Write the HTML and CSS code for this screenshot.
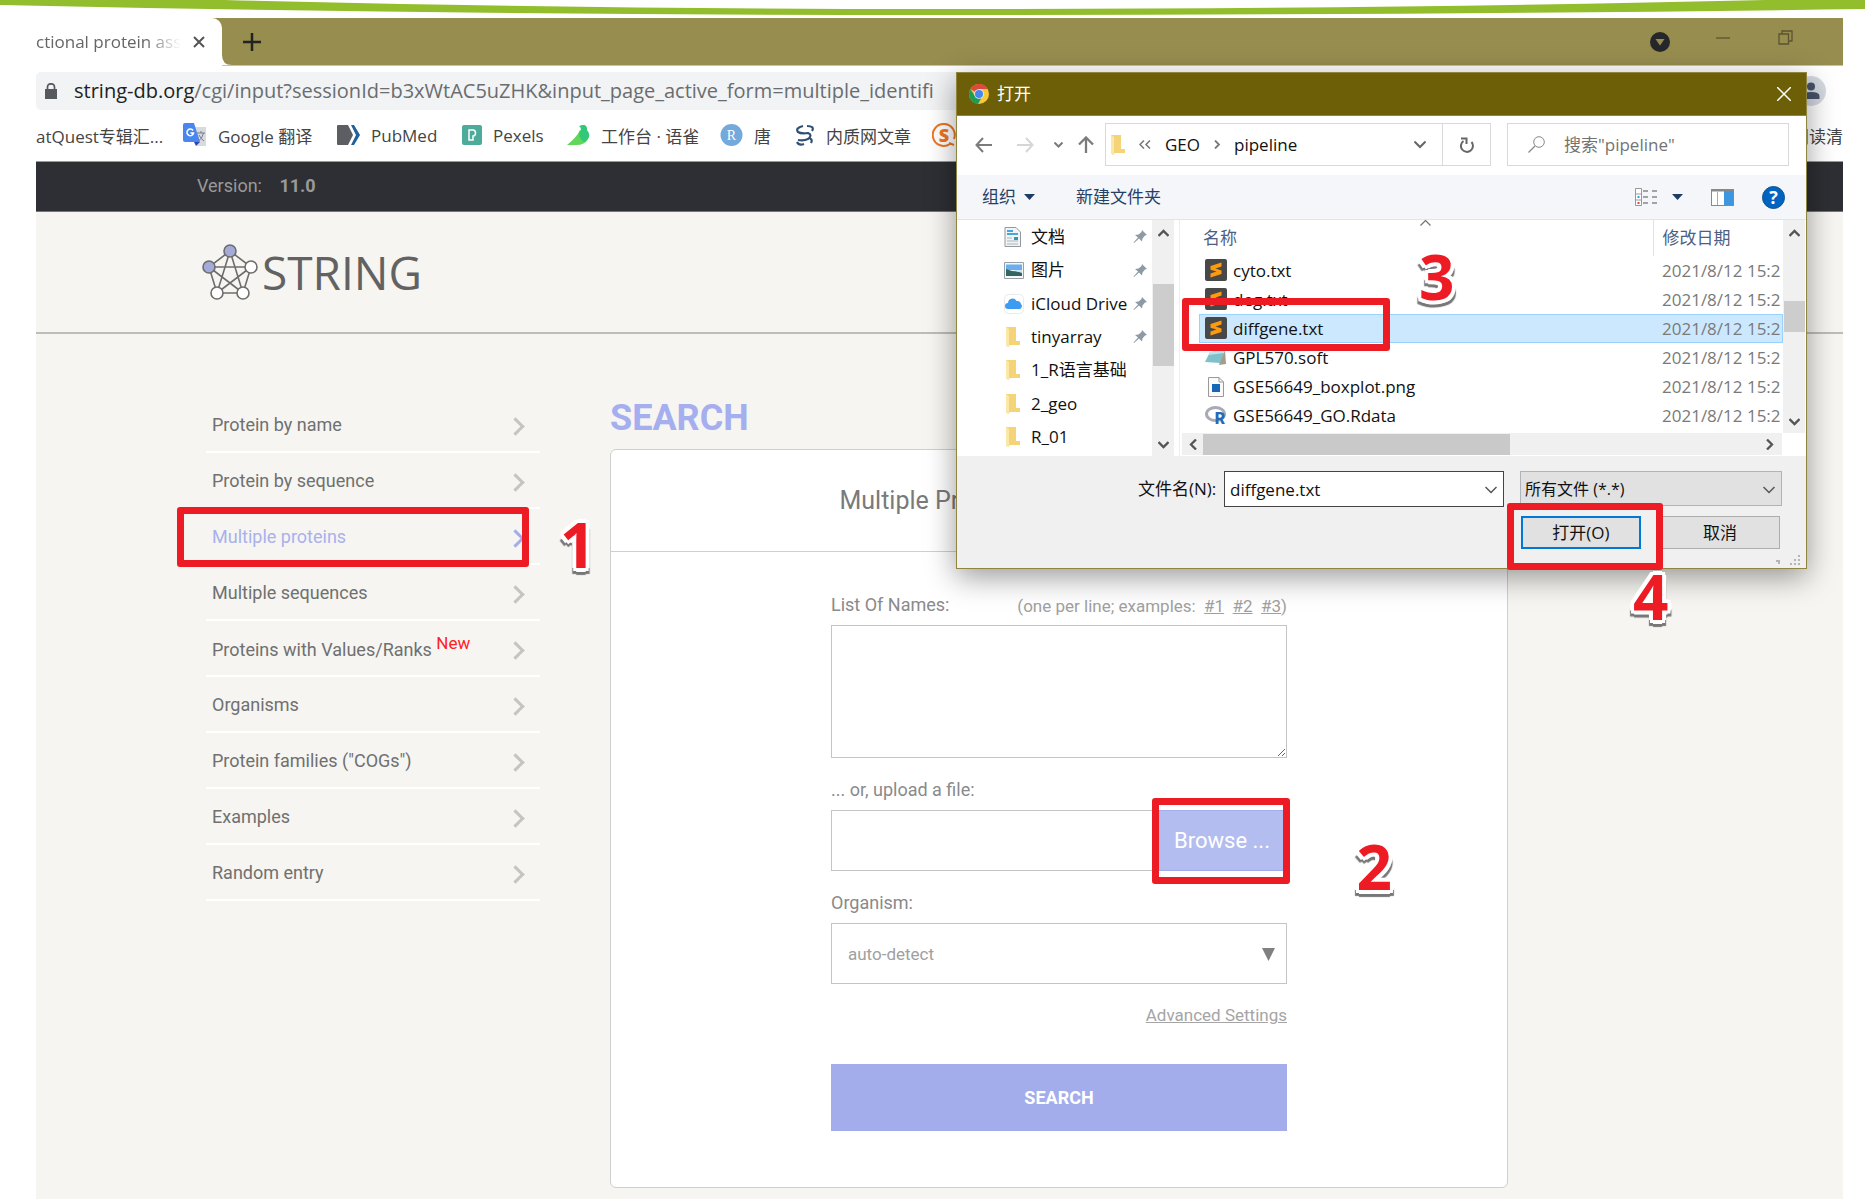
FILE: index.html
```html
<!DOCTYPE html>
<html lang="zh-CN">
<head>
<meta charset="utf-8">
<title>STRING: functional protein association networks</title>
<link rel="stylesheet" href="styles.css">
</head>
<body>
<div class="slide">
  <svg class="swoosh" viewBox="0 0 1865 18" preserveAspectRatio="none" aria-hidden="true"><path d="M0 0H225Q580 9 930 9Q1400 9 1765 0H1865V9Q1450 15 930 15Q450 15 0 5Z" fill="#92be2e"/></svg>

  <div class="browser">
    <div class="tabstrip">
      <div class="tab"><span class="tab-title">ctional protein ass</span>
        <button class="plain" aria-label="Close tab"><svg width="12" height="12" viewBox="0 0 12 12"><path d="M1 1L11 11M11 1L1 11" stroke="#555" stroke-width="2"/></svg></button>
      </div>
      <svg class="tab-foot" width="10" height="10" viewBox="0 0 10 10"><path d="M0 0Q0 10 10 10H0Z" fill="#fff"/></svg>
      <button class="plain newtab" aria-label="New tab"><svg width="18" height="18" viewBox="0 0 18 18"><path d="M9 0V18M0 9H18" stroke="#222" stroke-width="2.5"/></svg></button>
      <div class="win-controls">
        <svg width="20" height="20" viewBox="0 0 20 20"><circle cx="10" cy="10" r="10" fill="#25272b"/><path d="M5.500 7H14.500L10 13.500Z" fill="#978d4f"/></svg>
        <svg width="14" height="14" viewBox="0 0 14 14"><path d="M0 3H14" stroke="#5a5430" stroke-width="1.300"/></svg>
        <svg class="restore" width="15" height="15" viewBox="0 0 15 15"><path d="M1 4H10.500V14H1ZM4 4V1H14V11H10.500" fill="none" stroke="#5a5430" stroke-width="1.300"/></svg>
      </div>
    </div>
    <div class="toolbar">
      <div class="address">
        <svg width="12" height="16" viewBox="0 0 12 16"><path d="M0 6H12V16H0Z" fill="#55585d"/><path d="M2.500 6V4A3.500 3.200 0 0 1 9.500 4V6" fill="none" stroke="#55585d" stroke-width="1.700"/></svg>
        <span class="url"><b>string-db.org</b>/cgi/input?sessionId=b3xWtAC5uZHK&amp;input_page_active_form=multiple_identifi</span>
      </div>
      <svg class="avatar" width="30" height="30" viewBox="0 0 30 30"><circle cx="15" cy="15" r="15" fill="#d5d9e0"/><circle cx="15" cy="10.500" r="4" fill="#48546b"/><path d="M6.500 23V20Q6.500 16 15 16Q23.500 16 23.500 20V23Z" fill="#48546b"/></svg>
    </div>
    <nav class="bookmarks" aria-label="Bookmarks">
      <a href="#" class="bm-first">atQuest专辑汇...</a>
      <a href="#" class="bm-google"><svg width="24" height="24" viewBox="0 0 24 24"><path d="M9 4H23V23H14Z" fill="#d8dade"/><path d="M0 2Q0 0 2 0H11L17 19H2Q0 19 0 17Z" fill="#4a86f0"/><path d="M11 19H17L13 23Z" fill="#2b45b8"/><path d="M14 10H22M18 8V10M20.500 10Q19 16 15.500 18M16 12Q18 16 21 18" stroke="#777f89" fill="none"/><path d="M10 7.500A3.300 3.300 0 1 0 10.500 10H7.500" fill="none" stroke="#fff" stroke-width="1.500"/></svg>Google 翻译</a>
      <a href="#" class="bm-pubmed"><svg width="23" height="20" viewBox="0 0 23 20"><path d="M0 1Q0 0 1 0H11L16 10L11 20H1Q0 20 0 19Z" fill="#5c5e63"/><path d="M14 0H17L23 10L17 20H14L19 10Z" fill="#20609b"/></svg>PubMed</a>
      <a href="#" class="bm-pexels"><svg width="20" height="20" viewBox="0 0 20 20"><rect width="20" height="20" rx="2" fill="#4dab9b"/><path d="M7 5H11Q13.500 5 13.500 8Q13.500 11 11 11V15H7Z" fill="none" stroke="#fff" stroke-width="1.500"/></svg>Pexels</a>
      <a href="#" class="bm-bird"><svg width="23" height="21" viewBox="0 0 23 21"><path d="M0 20Q10 12 13 5L21 8Q23 10 21 14Q18 20 9 20Z" fill="#60d65a"/><path d="M12 1Q19 -2 20 3V5Q23 8 22 12Q20 16 17 17Q9 11 14 5Q14 2 12 1Z" fill="#31c877"/></svg>工作台 · 语雀</a>
      <a href="#" class="bm-r"><svg width="23" height="22" viewBox="0 0 23 22"><circle cx="11.500" cy="11" r="11" fill="#74a9db"/><text x="11.500" y="16" text-anchor="middle" class="glyph-serif">R</text></svg>唐</a>
      <a href="#" class="bm-ncbi"><svg width="20" height="22" viewBox="0 0 20 22"><path d="M8 2Q0 4 3 8Q6 10 13 9Q18 11 13 15Q9 17 3 16M12 2Q20 2 17 7M2 18Q4 22 9 20M14 14Q18 15 16 19" fill="none" stroke="#304f73" stroke-width="2.200"/></svg>内质网文章</a>
      <a href="#" class="bm-s"><svg width="24" height="24" viewBox="0 0 24 24"><path d="M18 21A11 11 0 1 1 22 16M17 20L22 22" fill="none" stroke="#ef7623" stroke-width="2"/><text x="12" y="18.500" text-anchor="middle" class="glyph-s">S</text></svg></a>
      <a href="#" class="reading">阅读清</a>
    </nav>

    <div class="version">Version: <strong>11.0</strong></div>
    <header class="site-head">
      <svg width="56" height="56" viewBox="0 0 56 56"><g fill="none" stroke="#6d6d6d" stroke-width="1.600"><path d="M28 7L49 23L41 49H15L7 23ZM28 7L15 49L49 23H7L41 49Z"/></g><g fill="#fff" stroke="#6d6d6d" stroke-width="1.600"><circle cx="28" cy="7" r="6" fill="#a5abd9"/><circle cx="7" cy="23" r="6" fill="#a5abd9"/><circle cx="49" cy="23" r="6"/><circle cx="15" cy="49" r="6"/><circle cx="41" cy="49" r="6"/></g></svg>
      <span class="wordmark">STRING</span>
    </header>

    <main class="page">
      <nav class="menu" aria-label="Search type">
        <a href="#">Protein by name<i class="chev"></i></a>
        <a href="#">Protein by sequence<i class="chev"></i></a>
        <a href="#" class="active">Multiple proteins<i class="chev"></i><span class="mark mark-1"></span><span class="num num-1">1</span></a>
        <a href="#">Multiple sequences<i class="chev"></i></a>
        <a href="#"><span>Proteins with Values/Ranks <em class="new">New</em></span><i class="chev"></i></a>
        <a href="#">Organisms<i class="chev"></i></a>
        <a href="#">Protein families ("COGs")<i class="chev"></i></a>
        <a href="#">Examples<i class="chev"></i></a>
        <a href="#">Random entry<i class="chev"></i></a>
      </nav>
      <section class="content">
        <h1>SEARCH</h1>
        <div class="card">
          <h2>Multiple Proteins by Names / Identifiers</h2>
          <form class="form">
            <div class="label-row"><label for="names">List Of Names:</label><span class="hint">(one per line; examples:&nbsp; <a href="#">#1</a>&nbsp; <a href="#">#2</a>&nbsp; <a href="#">#3</a>)</span></div>
            <textarea id="names"></textarea>
            <label class="label-row" for="upload">... or, upload a file:</label>
            <div class="upload"><input id="upload" type="text"><button type="button">Browse ...</button><span class="mark mark-2"></span><span class="num num-2">2</span></div>
            <label class="label-row" for="organism">Organism:</label>
            <div class="select"><select id="organism"><option>auto-detect</option></select><svg width="13" height="13" viewBox="0 0 14 14"><path d="M0 0H14L7 14Z" fill="#808080"/></svg></div>
            <a href="#" class="advanced">Advanced Settings</a>
            <button type="button" class="submit">SEARCH</button>
          </form>
        </div>
      </section>
    </main>

    <div class="dialog" role="dialog" aria-label="打开">
      <div class="dlg-title">
        <svg width="20" height="20" viewBox="0 0 20 20"><circle cx="10" cy="10" r="10" fill="#f9c83b"/><path d="M10 10L1.340 5A10 10 0 0 1 18.700 5H10Z" fill="#dc4a3c"/><path d="M1.340 5A10 10 0 0 0 9 20L13.500 12L6 12Z" fill="#229a55"/><circle cx="10" cy="10" r="4.800" fill="#e8eefc"/><circle cx="10" cy="10" r="4" fill="#4787ee"/></svg>
        <span>打开</span>
        <button class="plain" aria-label="Close"><svg width="14" height="14" viewBox="0 0 14 14"><path d="M0 0L14 14M14 0L0 14" stroke="#fff" stroke-width="1.500"/></svg></button>
      </div>
      <div class="dlg-nav">
        <div class="arrows">
          <svg width="17" height="16" viewBox="0 0 17 16"><path d="M17 8H2M8 1L1.500 8L8 15" fill="none" stroke="#7b7b7b" stroke-width="2"/></svg>
          <svg width="17" height="16" viewBox="0 0 17 16"><path d="M0 8H15M9 1L15.500 8L9 15" fill="none" stroke="#d6d6d6" stroke-width="2"/></svg>
          <svg width="9" height="6" viewBox="0 0 9 6"><path d="M0.500 0.500L4.500 4.500L8.500 0.500" fill="none" stroke="#7b7b7b" stroke-width="2"/></svg>
          <svg width="16" height="17" viewBox="0 0 16 17"><path d="M8 17V2M1 8.500L8 1.500L15 8.500" fill="none" stroke="#7b7b7b" stroke-width="2.300"/></svg>
        </div>
        <div class="crumbs"><svg class="folder" width="14" height="20" viewBox="0 0 14 20"><path d="M0 0H10V14L14 14V18H4L2 20L0 18Z" fill="#f5d477"/><path d="M0 0L3 2V20L0 18Z" fill="#fbe7a8"/></svg>
          <svg width="12" height="9" viewBox="0 0 12 9"><path d="M5 0.500L1 4.500L5 8.500M11 0.500L7 4.500L11 8.500" fill="none" stroke="#777" stroke-width="1.500"/></svg><span>GEO</span>
          <svg width="6" height="9" viewBox="0 0 6 9"><path d="M1 0.500L5 4.500L1 8.500" fill="none" stroke="#777" stroke-width="1.800"/></svg><span>pipeline</span>
          <svg class="drop" width="12" height="8" viewBox="0 0 12 8"><path d="M0.500 0.500L6 6L11.500 0.500" fill="none" stroke="#666" stroke-width="2"/></svg>
          <button class="plain refresh" aria-label="Refresh"><svg width="14" height="16" viewBox="0 0 14 16"><path d="M3.500 4A6 6 0 1 0 11.500 5M1 1.500H6.500V7" fill="none" stroke="#666" stroke-width="2"/></svg></button>
        </div>
        <label class="find"><svg width="17" height="17" viewBox="0 0 17 17"><circle cx="11" cy="6" r="5.300" fill="none" stroke="#888"/><path d="M7 10L0.500 16.500" stroke="#888" stroke-width="1.300"/></svg><input type="text" placeholder='搜索"pipeline"' aria-label="搜索"></label>
      </div>
      <div class="dlg-tools">
        <button class="plain">组织<svg width="11" height="6" viewBox="0 0 11 6"><path d="M0 0H11L5.500 6Z" fill="#1e3c66"/></svg></button>
        <button class="plain">新建文件夹</button>
        <div class="tools-right">
          <svg width="23" height="18" viewBox="0 0 23 18"><path d="M0.500 0.500H6.500V17.500H0.500ZM0.500 6H6.500M0.500 12H6.500" fill="#fff" stroke="#999"/><path d="M8 3H13M17 3H22M8 9H13M17 9H22M8 15H13M17 15H22" stroke="#888" stroke-width="1.500"/><path d="M2.500 9H4.500" stroke="#389bd6" stroke-width="2"/><path d="M2.500 15H4.500" stroke="#d04848" stroke-width="2"/></svg>
          <svg width="11" height="6" viewBox="0 0 11 6"><path d="M0 0H11L5.500 6Z" fill="#1e3c66"/></svg>
          <svg width="23" height="17" viewBox="0 0 23 17"><rect x=".5" y=".5" width="22" height="16" fill="#fff" stroke="#888"/><path d="M0 1.500H23" stroke="#888" stroke-width="2"/><path d="M6.500 3V16" stroke="#aaa"/><rect x="13" y="2" width="9" height="14" fill="#3e97de"/></svg>
          <svg width="23" height="23" viewBox="0 0 23 23"><circle cx="11.500" cy="11.500" r="11" fill="#0065c1" stroke="#15508c"/><text x="11.500" y="18" text-anchor="middle" class="glyph-q">?</text></svg>
        </div>
      </div>
      <div class="dlg-body">
        <ul class="tree">
          <li><svg width="17" height="20" viewBox="0 0 17 20"><path d="M1 .5H12L16.500 5V19.500H1Z" fill="#f1f3f4" stroke="#93999c"/><path d="M3 4H9M3 7H14" stroke="#44a8de" stroke-width="2"/><path d="M3 11H8M3 14H14M3 17H14" stroke="#a6b5bd"/><path d="M10 10H14V13H10Z" fill="#39a"/></svg><span>文档</span><svg class="pin"><use href="#pin"/></svg></li>
          <li><svg width="20" height="17" viewBox="0 0 20 17"><path d="M.5 .5H19.500V16.500H.5Z" fill="#f6f7f8" stroke="#9a9fa4"/><path d="M2 2.500H18V8H2Z" fill="#69aef0"/><path d="M2 7L8 9L18 10V14H2Z" fill="#36655f"/><path d="M9 8H18V11Z" fill="#c5e4f4"/></svg><span>图片</span><svg class="pin"><use href="#pin"/></svg></li>
          <li><svg width="20" height="20" viewBox="0 0 20 20"><rect x=".5" y=".5" width="19" height="19" rx="4" fill="#fff" stroke="#eaeaea"/><path d="M4 15A3 3 0 0 1 4 9A4.500 4.500 0 0 1 12.500 7A4 4 0 0 1 17 10A3 3 0 0 1 16 15Z" fill="#3d9bf2"/></svg><span>iCloud Drive</span><svg class="pin"><use href="#pin"/></svg></li>
          <li><svg class="folder" width="14" height="20" viewBox="0 0 14 20"><path d="M0 0H10V14L14 14V18H4L2 20L0 18Z" fill="#f5d477"/><path d="M0 0L3 2V20L0 18Z" fill="#fbe7a8"/></svg><span>tinyarray</span><svg class="pin"><use href="#pin"/></svg></li>
          <li><svg class="folder" width="14" height="20" viewBox="0 0 14 20"><path d="M0 0H10V14L14 14V18H4L2 20L0 18Z" fill="#f5d477"/><path d="M0 0L3 2V20L0 18Z" fill="#fbe7a8"/></svg><span>1_R语言基础</span></li>
          <li><svg class="folder" width="14" height="20" viewBox="0 0 14 20"><path d="M0 0H10V14L14 14V18H4L2 20L0 18Z" fill="#f5d477"/><path d="M0 0L3 2V20L0 18Z" fill="#fbe7a8"/></svg><span>2_geo</span></li>
          <li><svg class="folder" width="14" height="20" viewBox="0 0 14 20"><path d="M0 0H10V14L14 14V18H4L2 20L0 18Z" fill="#f5d477"/><path d="M0 0L3 2V20L0 18Z" fill="#fbe7a8"/></svg><span>R_01</span></li>
        </ul>
        <div class="vbar vbar-tree"><svg width="11" height="8" viewBox="0 0 11 8"><path d="M.5 7L5.500 2L10.500 7" fill="none" stroke="#555" stroke-width="2.300"/></svg><i></i><svg width="11" height="8" viewBox="0 0 11 8"><path d="M.5 1L5.500 6L10.500 1" fill="none" stroke="#555" stroke-width="2.300"/></svg></div>
        <div class="files">
          <div class="files-top">
            <div class="file-list">
              <svg class="sort" width="11" height="6" viewBox="0 0 11 6"><path d="M.5 5.500L5.500 .5L10.500 5.500" fill="none" stroke="#777" stroke-width="1.300"/></svg>
              <table>
                <thead><tr><th>名称</th><th class="date">修改日期</th></tr></thead>
                <tbody>
                  <tr><td><svg class="fi"><use href="#subl"/></svg>cyto.txt</td><td class="date">2021/8/12 15:2</td></tr>
                  <tr><td><svg class="fi"><use href="#subl"/></svg>deg.txt</td><td class="date">2021/8/12 15:2</td></tr>
                  <tr class="selected"><td><svg class="fi"><use href="#subl"/></svg>diffgene.txt</td><td class="date">2021/8/12 15:2</td></tr>
                  <tr><td><svg class="fi" viewBox="0 0 22 22"><path d="M5 5L20 3L15 16L0 15Z" fill="#7fc0cb"/><path d="M20 3L21 17L14 18L15 15Z" fill="#a29d8d"/><path d="M5 5L20 3L19 6L4 8Z" fill="#bde4e8"/></svg>GPL570.soft</td><td class="date">2021/8/12 15:2</td></tr>
                  <tr><td><svg class="fi" viewBox="0 0 22 22"><path d="M3.500 1.500H14L18.500 6V20.500H3.500Z" fill="#fafafa" stroke="#999"/><path d="M14 1.500V6H18.500" fill="none" stroke="#999"/><rect x="7" y="8" width="8" height="8" fill="#1566b5"/></svg>GSE56649_boxplot.png</td><td class="date">2021/8/12 15:2</td></tr>
                  <tr><td><svg class="fi" viewBox="0 0 22 22"><ellipse cx="10.500" cy="9" rx="9" ry="6.500" fill="none" stroke="#a8abb3" stroke-width="3"/><text x="15" y="19" text-anchor="middle" class="glyph-r">R</text></svg>GSE56649_GO.Rdata</td><td class="date">2021/8/12 15:2</td></tr>
                </tbody>
              </table>
              <span class="mark mark-3"></span><span class="num num-3">3</span>
            </div>
            <div class="vbar vbar-list"><svg width="11" height="8" viewBox="0 0 11 8"><path d="M.5 7L5.500 2L10.500 7" fill="none" stroke="#555" stroke-width="2.300"/></svg><i></i><svg width="11" height="8" viewBox="0 0 11 8"><path d="M.5 1L5.500 6L10.500 1" fill="none" stroke="#555" stroke-width="2.300"/></svg></div>
          </div>
          <div class="hbar"><svg width="8" height="11" viewBox="0 0 8 11"><path d="M7 .5L2 5.500L7 10.500" fill="none" stroke="#555" stroke-width="2.300"/></svg><i></i><svg width="8" height="11" viewBox="0 0 8 11"><path d="M1 .5L6 5.500L1 10.500" fill="none" stroke="#555" stroke-width="2.300"/></svg></div>
        </div>
      </div>
      <div class="dlg-foot">
        <div class="foot-row">
          <label for="fname">文件名(N):</label>
          <div class="combo"><input id="fname" type="text" value="diffgene.txt"><svg width="12" height="8" viewBox="0 0 12 8"><path d="M.5 1L6 6.500L11.500 1" fill="none" stroke="#555" stroke-width="1.500"/></svg></div>
          <div class="ftype"><select aria-label="文件类型"><option>所有文件 (*.*)</option></select><svg width="12" height="8" viewBox="0 0 12 8"><path d="M.5 1L6 6.500L11.500 1" fill="none" stroke="#555" stroke-width="1.500"/></svg></div>
        </div>
        <div class="foot-buttons"><button class="open">打开(O)</button><button>取消</button><span class="mark mark-4"></span><span class="num num-4">4</span></div>
        <svg class="grip" width="26" height="12" viewBox="0 0 26 12"><path d="M22 0H24V2H22ZM18 4H20V6H18ZM22 4H24V6H22ZM14 8H16V10H14ZM18 8H20V10H18ZM22 8H24V10H22ZM0 5H4V9H2V7H0Z" fill="#b5b5b5"/></svg>
      </div>
    </div>
  </div>
</div>
<svg class="defs" aria-hidden="true">
  <symbol id="pin" viewBox="0 0 15 15"><path d="M9 1L14 6L12 6.500L9.500 9.500L9 12.500L6 9.500L1 14L0.500 13.500L5 8.500L2 6L5.500 5.500L8.500 3Z" fill="#8d9aa4"/></symbol>
  <symbol id="subl" viewBox="0 0 22 22"><rect width="22" height="22" rx="2" fill="#484848"/><path d="M5.500 7L16.500 3.500V7.500L10.500 9.500L16.500 11.500V15L5.500 18.500V14.500L11.500 12.500L5.500 10.800Z" fill="#ff9a0c"/></symbol>
</svg>
</body>
</html>
```
FILE: styles.css
```css
* { box-sizing: border-box; }
body { margin: 0; background: #fff; font-family: Roboto, "Noto Sans CJK SC", sans-serif; }
a { color: inherit; }
button, input, select, textarea { font: inherit; color: inherit; margin: 0; border-radius: 0; }
.plain { border: 0; padding: 0; background: none; display: flex; align-items: center; }
svg { display: block; flex: none; }
.defs { position: absolute; width: 0; height: 0; }

.slide { position: relative; display: flex; min-height: 100vh; padding: 18px 22px 0 36px; overflow: hidden; }
.swoosh { position: absolute; top: 0; left: 0; width: 100%; height: 18px; }
.browser { position: relative; flex: 1; min-width: 0; display: flex; flex-direction: column; background: #f6f5f1; }

/* browser chrome */
.tabstrip, .toolbar, .bookmarks { font-family: "Open Sans", "Noto Sans CJK SC", sans-serif; }
.tabstrip { display: flex; align-items: center; height: 48px; background: #978d4f; border-bottom: 1px solid #c9c39c; }
.tab { display: flex; align-items: center; gap: 12px; width: 186px; height: 48px; background: #fff; border-radius: 0 10px 0 0; }
.tab-foot { align-self: flex-end; }
.tab-title { width: 145px; overflow: hidden; white-space: nowrap; font-size: 17px; color: #666; -webkit-mask-image: linear-gradient(90deg, #000 75%, transparent); mask-image: linear-gradient(90deg, #000 75%, transparent); }
.newtab { margin-left: 11px; }
.win-controls { display: flex; align-items: center; gap: 44px; margin-left: auto; padding-right: 50px; }
.win-controls svg:first-child { margin-right: 2px; }
.win-controls .restore { margin-left: 4px; margin-bottom: 8px; }
.toolbar { display: flex; align-items: center; height: 49px; background: #fff; padding-right: 17px; gap: 16px; }
.address { flex: 1; min-width: 0; display: flex; align-items: center; gap: 17px; height: 38px; padding-left: 9px; background: #f1f3f4; border-radius: 5px 0 0 5px; color: #6a6d70; font-size: 20px; }
.url { overflow: hidden; white-space: nowrap; }
.url b { font-weight: 400; color: #222; }
.bookmarks { display: flex; align-items: center; height: 47px; padding-bottom: 6px; background: #fff; border-bottom: 1px solid #999; font-size: 17px; color: #444; white-space: nowrap; overflow: hidden; }
.bookmarks a { display: flex; align-items: center; gap: 11px; text-decoration: none; }
.bm-first { width: 147px; }
.bm-google { width: 154px; }
.bm-pubmed { width: 125px; }
.bm-pexels { width: 105px; }
.bm-bird { width: 153px; }
.bm-r { width: 75px; }
.bm-ncbi { width: 137px; }
.reading { margin-left: auto; }
.glyph-serif { font: 14px "Liberation Serif", serif; fill: #fff; }
.glyph-s { font: 800 18px "Open Sans", sans-serif; fill: #ef7623; }
.glyph-q { font: 700 18px "Open Sans", sans-serif; fill: #fff; }
.glyph-r { font: 900 16px Roboto, sans-serif; fill: #2768b8; }

/* page */
.version { height: 50px; padding-left: 161px; background: #2e2f34; border-bottom: 1px solid #77747a; font-size: 18px; line-height: 48px; color: #999; }
.version strong { margin-left: 13px; }
.site-head { display: flex; align-items: center; gap: 4px; height: 122px; padding-left: 166px; border-bottom: 2px solid #bdbcb9; }
.wordmark { font: 46px/60px "Open Sans", sans-serif; color: #626262; }
.page { display: flex; gap: 70px; padding: 0 335px 0 170px; }
.menu { width: 334px; flex: none; padding-top: 63px; }
.menu a { position: relative; display: flex; align-items: center; justify-content: space-between; height: 56px; padding: 0 18px 0 6px; border-bottom: 2px solid #fff; font-size: 18px; color: #707070; text-decoration: none; }
.menu .active { color: #a9b1ec; }
.new { font-style: normal; font-size: 17px; color: #f22; vertical-align: 7px; line-height: 14px; }
.chev { width: 13px; height: 13px; margin-top: 5px; border: solid #c4c4c2; border-width: 3px 3px 0 0; transform: rotate(45deg); }
.active .chev { border-color: #a3adec; }
.content { flex: 1; min-width: 0; }
h1 { margin: 62px 0 9px; font-size: 36px; line-height: 44px; color: #a5aeee; }
.card { height: 739px; background: #fff; border: 1px solid #cfcfcf; border-radius: 6px; }
h2 { margin: 0; border-bottom: 1px solid #cfcfcf; font-weight: 400; font-size: 25px; line-height: 101px; text-align: center; color: #7a7a7a; white-space: nowrap; }
.form { display: flex; flex-direction: column; width: 456px; margin: 0 auto; padding-top: 36px; color: #8a8a8a; font-size: 18px; }
.label-row { display: flex; justify-content: space-between; align-items: center; height: 37px; padding-bottom: 5px; }
.form > label.label-row { margin-top: 13px; height: 39px; padding-bottom: 2px; }
.hint { margin-top: 4px; font-size: 17px; color: #a0a0a0; }
textarea { height: 133px; border: 1px solid #c4c4c4; background: #fff; resize: vertical; }
.upload { position: relative; display: flex; height: 61px; }
.upload input { flex: 1; min-width: 0; border: 1px solid #c4c4c4; border-right: 0; background: #fff; }
.upload button { width: 134px; border: 1px solid #a3adec; padding: 0 0 0 4px; background: #b4bdf0; color: #fff; font-size: 22px; }
.select { position: relative; }
.select select { display: block; width: 100%; height: 61px; padding: 0 16px; appearance: none; border: 1px solid #c4c4c4; background: #fff; color: #a0a0a0; font-size: 17px; }
.select svg { position: absolute; right: 12px; top: 25px; }
.advanced { margin: 21px 0 39px; align-self: flex-end; font-size: 17px; line-height: 20px; color: #a5a5a5; }
.submit { height: 67px; border: 0; background: #a3adec; color: #fff; font-weight: 700; }

/* file dialog */
.dialog { position: absolute; left: 920px; top: 54px; width: 851px; border: 1px solid #8f8540; background: #fff; box-shadow: 0 8px 28px rgba(0, 0, 0, .4); font-family: "Open Sans", "Noto Sans CJK SC", sans-serif; font-size: 17px; line-height: 24px; color: #111; }
.dlg-title { display: flex; align-items: center; gap: 8px; height: 43px; padding: 0 15px 0 12px; background: #6c5f07; color: #fff; border-bottom: 1px solid #8f8540; }
.dlg-title .plain { margin-left: auto; }
.dlg-nav { display: flex; gap: 11px; height: 59px; padding: 7px 17px 9px 18px; }
.arrows { display: flex; align-items: center; gap: 20px; width: 119px; }
.arrows svg:nth-child(2) { margin-left: 5px; }
.arrows svg:nth-child(4) { margin-left: -5px; }
.crumbs { display: flex; align-items: center; gap: 14px; width: 386px; padding-left: 5px; border: 1px solid #d9d9d9; }
.drop { margin-left: auto; }
.refresh { align-self: stretch; width: 48px; justify-content: center; border-left: 1px solid #d9d9d9; margin-left: 2px; }
.find { flex: 1; min-width: 0; display: flex; align-items: center; gap: 19px; margin-left: 5px; padding-left: 20px; border: 1px solid #d9d9d9; }
.find input { width: 180px; border: 0; padding: 0; background: none; }
.find input::placeholder { color: #737373; opacity: 1; }
.dlg-tools { display: flex; align-items: center; gap: 41px; height: 45px; padding: 0 21px 0 25px; background: #f4f6f9; border-bottom: 1px solid #e2e4e6; color: #254067; }
.dlg-tools .plain { gap: 8px; }
.tools-right { display: flex; align-items: center; gap: 28px; margin-left: auto; }
.tools-right svg:nth-child(2) { margin-left: -14px; }
.dlg-body { display: flex; height: 236px; }
.tree { display: grid; grid-auto-rows: 1fr; width: 195px; margin: 0; padding: 0 0 2px 47px; list-style: none; }
.tree li { display: grid; grid-template-columns: 20px 1fr 15px; column-gap: 7px; align-items: center; justify-items: start; white-space: nowrap; }
.tree .folder { margin-left: 2px; }
.tree span { max-width: 100px; }
.tree li > span:last-child { grid-column: 2 / 4; max-width: none; }
.pin { width: 15px; height: 15px; margin-left: -4px; }
.vbar { display: flex; flex-direction: column; align-items: center; width: 22px; padding: 9px 0 7px; background: #f0f0f0; }
.vbar i { width: 21px; background: #cdcdcd; }
.vbar svg:last-child { margin-top: auto; }
.vbar-tree i { height: 82px; margin-top: 47px; }
.vbar-list i { height: 31px; margin-top: 64px; }
.files { flex: 1; min-width: 0; display: flex; flex-direction: column; margin-left: 5px; border-left: 1px solid #eee; }
.files-top { flex: 1; display: flex; min-height: 0; }
.file-list { position: relative; flex: 1; min-width: 0; padding-left: 19px; }
.sort { position: absolute; left: 240px; top: 0; }
table { width: 100%; height: 211px; border-collapse: collapse; table-layout: fixed; }
th, td { padding: 0; text-align: left; white-space: nowrap; overflow: hidden; line-height: 24px; }
th { height: 36px; font-weight: 400; color: #4d6082; padding-left: 4px; }
td { padding-left: 6px; }
.date { width: 130px; padding-left: 9px; color: #7a7a7a; }
th.date { color: #4d6082; border-left: 1px solid #e2e2e2; }
.selected { background: #cce8ff; box-shadow: inset 0 0 0 1px #99d1ff; }
.fi { display: inline-block; width: 22px; height: 22px; margin: -4px 6px 0 0; vertical-align: middle; }
.vbar-list { width: 22px; margin-right: 1px; }
.hbar { display: flex; align-items: center; height: 22px; margin: 0 24px 1px 2px; padding: 0 8px 0 7px; background: #f0f0f0; }
.hbar i { width: 307px; height: 21px; margin: 0 auto 0 6px; background: #c9c9c9; }
.dlg-foot { position: relative; display: flex; flex-direction: column; gap: 9px; height: 112px; padding: 15px 24px 0 181px; background: #f0f0f0; }
.foot-row { display: flex; align-items: flex-start; white-space: nowrap; }
.foot-row label { width: 86px; line-height: 35px; }
.combo, .ftype { position: relative; }
.combo { width: 280px; margin-right: 16px; }
.combo input { width: 100%; height: 36px; padding: 0 5px; border: 1px solid #444; background: #fff; display: block; }
.ftype { flex: 1; }
.ftype select { display: block; width: 100%; height: 35px; padding: 0 4px; appearance: none; border: 1px solid #adb5bb; background: #e1e1e1; font-size: 16px; }
.combo svg, .ftype svg { position: absolute; right: 7px; top: 15px; }
.foot-buttons { position: relative; align-self: flex-end; display: flex; gap: 19px; padding-right: 2px; }
.foot-buttons button { width: 120px; height: 33px; padding: 0; border: 1px solid #adadad; background: #e1e1e1; line-height: 26px; }
.foot-buttons .open { border: 2px solid #0078d7; }
.grip { position: absolute; right: 4px; bottom: 1px; }

/* numbered call-outs */
.mark { position: absolute; border: 7px solid #ed1c24; border-radius: 3px; }
.mark-1 { left: -29px; top: -2px; width: 352px; height: 60px; }
.mark-2 { right: -3px; top: -12px; width: 138px; height: 86px; }
.mark-3 { left: 2px; top: 78px; width: 208px; height: 53px; }
.mark-4 { left: -14px; top: -13px; width: 156px; height: 67px; }
.num { position: absolute; font: 700 62px/60px "Open Sans", sans-serif; color: #ed1c24; text-shadow: 4px 0 #fff, -4px 0 #fff, 0 4px #fff, 0 -4px #fff, 3px 3px #fff, -3px 3px #fff, 3px -3px #fff, -3px -3px #fff, 2px 0 #fff, -2px 0 #fff, 0 2px #fff, 0 7px 1px #777, -4px 6px 1px #777, 4px 6px 1px #777; }
.num-1 { left: 354px; top: 5px; }
.num-2 { right: -105px; top: 26px; }
.num-3 { left: 239px; top: 26px; }
.num-4 { left: 112px; top: 50px; }
```
